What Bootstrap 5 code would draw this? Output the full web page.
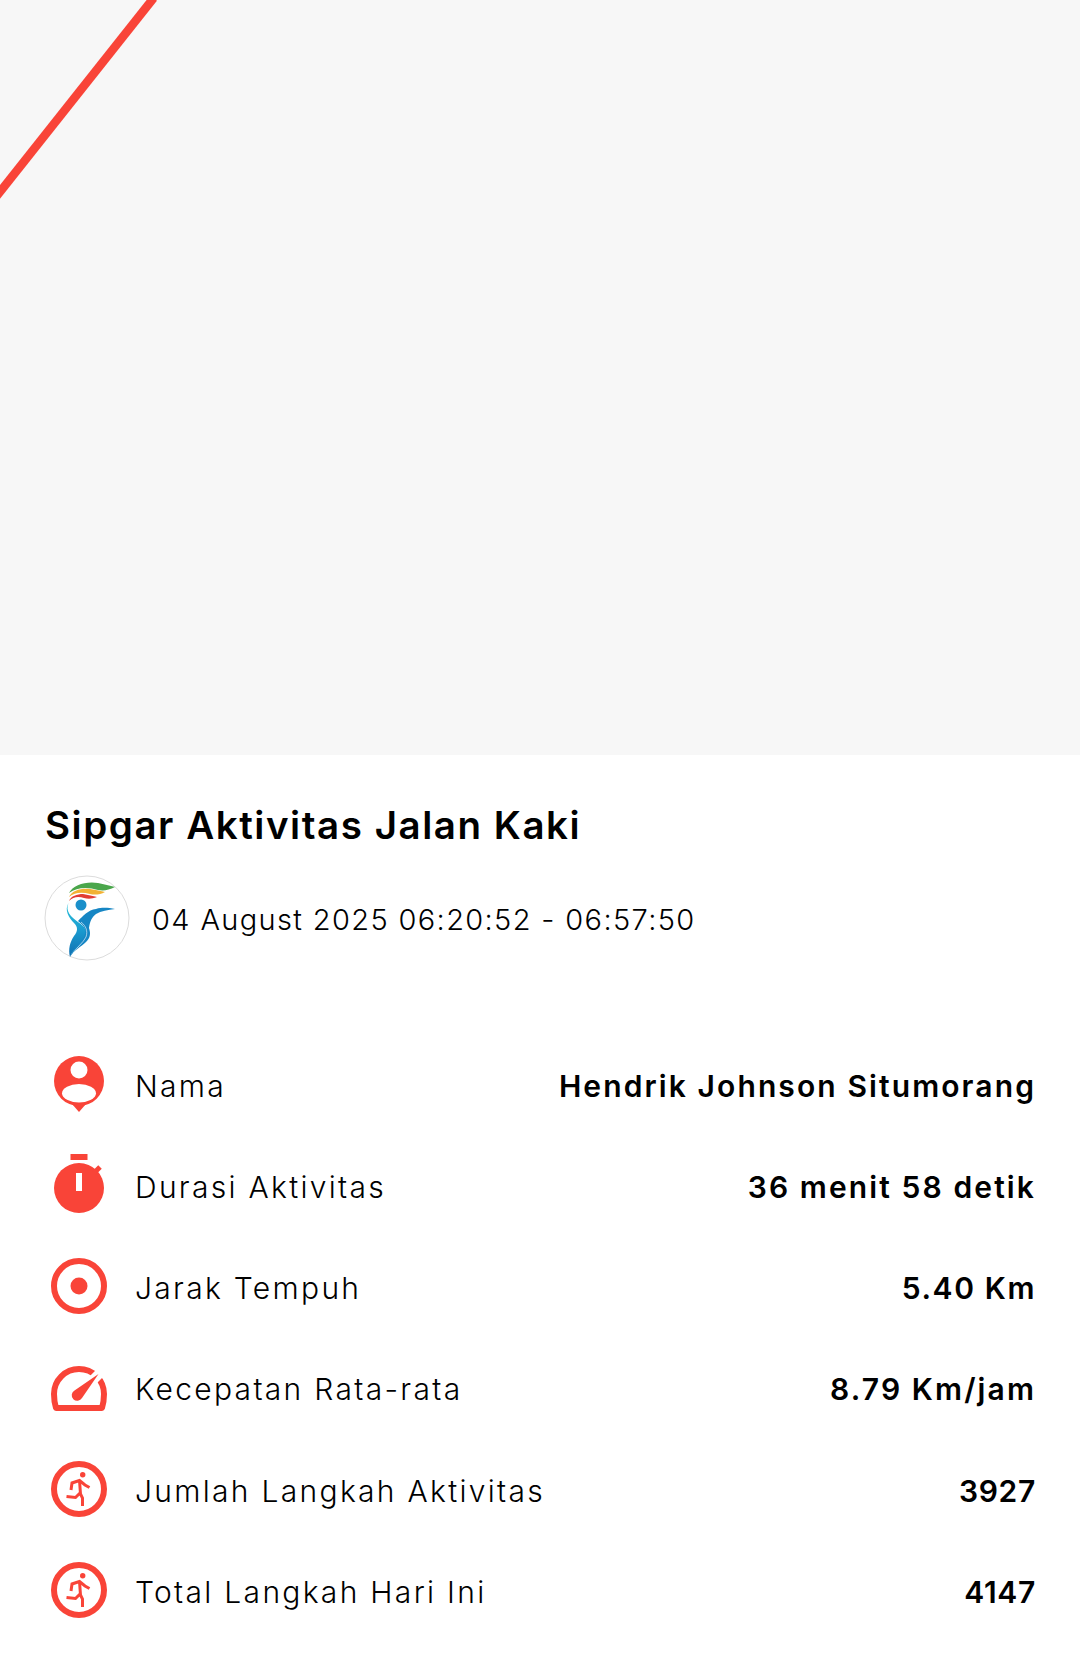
<!DOCTYPE html>
<html lang="en">
<head>
    <meta charset="UTF-8">
    <meta name="viewport" content="width=device-width, initial-scale=1.0">
    <title>Sipgar Aktivitas Jalan Kaki</title>
    <link href="https://cdn.jsdelivr.net/npm/bootstrap@5.3.0/dist/css/bootstrap.min.css" rel="stylesheet">
    <style>
        body {
            margin: 0;
            background: #fff;
            color: #000;
            font-family: Inter, "Open Sans", sans-serif;
            overflow: hidden;
        }
        .map-area {
            height: 755px;
            background: #f7f7f7;
        }
        .map-area svg {
            display: block;
        }
        .info-area {
            padding: 0 45px;
        }
        .info-title {
            margin: 0;
            padding-top: 48px;
            height: 120px;
            font-family: Inter, sans-serif;
            font-size: 38.5px;
            line-height: 44px;
            font-weight: 600;
            letter-spacing: 1.55px;
        }
        .date-row {
            height: 86px;
            margin-left: -1px;
            gap: 22px;
        }
        .date-text {
            padding-top: 4px;
            font-size: 29px;
            font-weight: 300;
            letter-spacing: 1.36px;
        }
        .stat-list {
            margin-top: 90px;
            gap: 31.3px;
        }
        .stat-row {
            height: 70px;
        }
        .stat-icon {
            width: 60px;
            height: 70px;
            margin-left: 4px;
            margin-right: 26px;
            flex: none;
        }
        .stat-label {
            font-size: 30px;
            font-weight: 300;
            letter-spacing: 2.3px;
        }
        .stat-value {
            margin-right: -1px;
            font-size: 30px;
            font-weight: 600;
            letter-spacing: 2.1px;
        }
        .stat-short {
            letter-spacing: 1.6px;
        }
        .stat-number {
            letter-spacing: 0.7px;
        }
    </style>
</head>
<body>
    <div class="map-area">
        <svg width="1080" height="755" viewBox="0 0 1080 755">
            <line x1="153.600" y1="-2" x2="-4" y2="197" stroke="#f94438" stroke-width="8.500"/>
        </svg>
    </div>

    <div class="info-area">
        <h1 class="info-title">Sipgar Aktivitas Jalan Kaki</h1>

        <div class="date-row d-flex align-items-center">
            <svg width="86" height="86" viewBox="0 0 86 86" class="flex-shrink-0">
                <defs>
                    <linearGradient id="bodyGrad" x1="0" y1="0" x2="0" y2="1">
                        <stop offset="0" stop-color="#2cc4da"/>
                        <stop offset="0.5" stop-color="#1a9bd0"/>
                        <stop offset="1" stop-color="#0f6fb0"/>
                    </linearGradient>
                </defs>
                <circle cx="43" cy="43" r="42" fill="#fff" stroke="#dcdcdc" stroke-width="1"/>
                <path d="M25 18C29 10 42 6 54 8C60 9 66 11 71 12C65 15 60 16 54 15C44 12 33 12 25 18Z" fill="#4aa64b"/>
                <path d="M25 22C28 15 38 13 46 14C52 15 57 16 61 17C56 20 50 20 46 19C38 17 31 17 25 22Z" fill="#f2b233"/>
                <path d="M25 26C27 21 33 19 39 19C44 20 49 21 53 22C48 24 44 24 40 23C34 21 29 22 25 26Z" fill="#e23d33"/>
                <circle cx="37" cy="30" r="5.500" fill="#1a8fca"/>
                <path d="M24.500 28C21 36 27 42 34 47C41 52 44 56 41 62C38 69 30 72 26 82C24 74 26 67 30 61C34 56 34 52 30 48C25 43 20 35 24.500 28Z" fill="url(#bodyGrad)"/>
                <path d="M34 46C39 41 44 35 52 34C59 32 65 33 71 34C64 35 57 36 52 39C48 42 46 46 45 53C47 59 46 63 42 67C37 72 30 75 26 82C29 73 36 69 40 62C43 56 41 51 34 46Z" fill="#1686c4"/>
                <path d="M37 47C42 51 44 56 42 62C39 68 33 72 29 78" fill="none" stroke="#fff" stroke-width="0.600"/>
            </svg>
            <span class="date-text">04 August 2025 06:20:52 - 06:57:50</span>
        </div>

        <div class="stat-list d-flex flex-column">
            <div class="stat-row d-flex align-items-center">
                <svg class="stat-icon" viewBox="0 0 60 70">
                    <circle cx="30" cy="30" r="25" fill="#f94438"/>
                    <path d="M23 53L30 61L37 53Z" fill="#f94438"/>
                    <circle cx="30" cy="19" r="8.500" fill="#fff"/>
                    <ellipse cx="30" cy="42.200" rx="17" ry="9.200" fill="#fff"/>
                </svg>
                <span class="stat-label">Nama</span>
                <span class="stat-value ms-auto">Hendrik Johnson Situmorang</span>
            </div>
            <div class="stat-row d-flex align-items-center">
                <svg class="stat-icon" viewBox="0 0 60 70">
                    <rect x="21.500" y="2" width="17" height="6" fill="#f94438"/>
                    <circle cx="30" cy="36" r="25" fill="#f94438"/>
                    <path d="M45 21L51 15" stroke="#f94438" stroke-width="5"/>
                    <rect x="27" y="21" width="6" height="18" fill="#fff"/>
                </svg>
                <span class="stat-label">Durasi Aktivitas</span>
                <span class="stat-value ms-auto">36 menit 58 detik</span>
            </div>
            <div class="stat-row d-flex align-items-center">
                <svg class="stat-icon" viewBox="0 0 60 70">
                    <circle cx="30" cy="32" r="25" fill="none" stroke="#f94438" stroke-width="6"/>
                    <circle cx="30" cy="32" r="8.500" fill="#f94438"/>
                </svg>
                <span class="stat-label">Jarak Tempuh</span>
                <span class="stat-value stat-short ms-auto">5.40 Km</span>
            </div>
            <div class="stat-row d-flex align-items-center">
                <svg class="stat-icon" viewBox="0 0 60 70">
                    <path d="M30 14a25 25 0 0 1 25 25c0 5-.5 9-2 14H7c-1.500-5-2-9-2-14a25 25 0 0 1 25-25Z" fill="none" stroke="#f94438" stroke-width="6" stroke-linejoin="round"/>
                    <path d="M32 37L57 12" stroke="#fff" stroke-width="10"/>
                    <path d="M49.500 19L33 43A5.500 5.500 0 1 1 25.500 35.500Z" fill="#f94438"/>
                </svg>
                <span class="stat-label">Kecepatan Rata-rata</span>
                <span class="stat-value ms-auto">8.79 Km/jam</span>
            </div>
            <div class="stat-row d-flex align-items-center">
                <svg class="stat-icon" viewBox="0 0 60 70">
                    <circle cx="30" cy="33" r="25" fill="none" stroke="#f94438" stroke-width="6"/>
                    <circle cx="33.700" cy="18.700" r="2.700" fill="#f94438"/>
                    <path d="M22 34L23 27L30.500 24.500L36 29L40.500 31.500M30.500 24.500L31.500 38L33.500 42V50M31 37L26.500 41.500L17.500 40.500" fill="none" stroke="#f94438" stroke-width="3"/>
                </svg>
                <span class="stat-label">Jumlah Langkah Aktivitas</span>
                <span class="stat-value stat-number ms-auto">3927</span>
            </div>
            <div class="stat-row d-flex align-items-center">
                <svg class="stat-icon" viewBox="0 0 60 70">
                    <circle cx="30" cy="33" r="25" fill="none" stroke="#f94438" stroke-width="6"/>
                    <circle cx="33.700" cy="18.700" r="2.700" fill="#f94438"/>
                    <path d="M22 34L23 27L30.500 24.500L36 29L40.500 31.500M30.500 24.500L31.500 38L33.500 42V50M31 37L26.500 41.500L17.500 40.500" fill="none" stroke="#f94438" stroke-width="3"/>
                </svg>
                <span class="stat-label">Total Langkah Hari Ini</span>
                <span class="stat-value stat-number ms-auto">4147</span>
            </div>
        </div>
    </div>

    <script src="https://cdn.jsdelivr.net/npm/bootstrap@5.3.0/dist/js/bootstrap.bundle.min.js"></script>
</body>
</html>
